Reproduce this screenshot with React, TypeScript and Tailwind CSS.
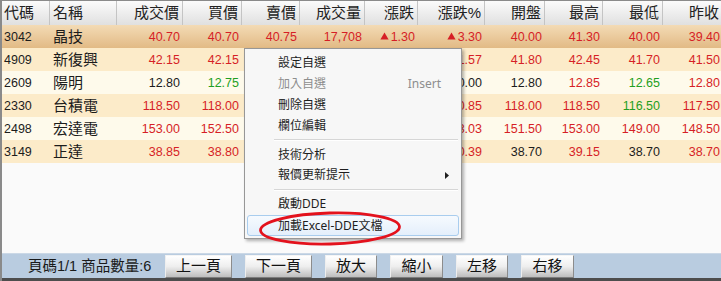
import React from 'react';

type Tone = 'r' | 'g' | 'k';
type Cell = [string, Tone, boolean?];

interface QuoteRow {
  code: string;
  name: string;
  cells: Cell[];
}

const headers = ['代碼', '名稱', '成交價', '買價', '賣價', '成交量', '漲跌', '漲跌%', '開盤', '最高', '最低', '昨收'];

// cells under the context menu are left blank: the menu hides them
const rows: QuoteRow[] = [
  {
    code: '3042',
    name: '晶技',
    cells: [['40.70', 'r'], ['40.70', 'r'], ['40.75', 'r'], ['17,708', 'r'], ['1.30', 'r', true], ['3.30', 'r', true], ['40.00', 'r'], ['41.30', 'r'], ['40.00', 'r'], ['39.40', 'r']],
  },
  {
    code: '4909',
    name: '新復興',
    cells: [['42.15', 'r'], ['42.15', 'r'], ['', 'r'], ['', 'r'], ['', 'r'], ['1.57', 'r', true], ['41.80', 'r'], ['42.45', 'r'], ['41.70', 'r'], ['41.50', 'r']],
  },
  {
    code: '2609',
    name: '陽明',
    cells: [['12.80', 'k'], ['12.75', 'g'], ['', 'k'], ['', 'k'], ['', 'k'], ['0.00', 'k'], ['12.80', 'k'], ['12.85', 'r'], ['12.65', 'g'], ['12.80', 'r']],
  },
  {
    code: '2330',
    name: '台積電',
    cells: [['118.50', 'r'], ['118.00', 'r'], ['', 'r'], ['', 'r'], ['', 'r'], ['0.85', 'r', true], ['118.00', 'r'], ['118.50', 'r'], ['116.50', 'g'], ['117.50', 'r']],
  },
  {
    code: '2498',
    name: '宏達電',
    cells: [['153.00', 'r'], ['152.50', 'r'], ['', 'r'], ['', 'r'], ['', 'r'], ['3.03', 'r', true], ['151.50', 'r'], ['153.00', 'r'], ['149.00', 'r'], ['148.50', 'r']],
  },
  {
    code: '3149',
    name: '正達',
    cells: [['38.85', 'r'], ['38.80', 'r'], ['', 'r'], ['', 'r'], ['', 'r'], ['0.39', 'r', true], ['38.70', 'k'], ['39.15', 'r'], ['38.70', 'k'], ['38.70', 'r']],
  },
];

const toneClass: Record<Tone, string> = {
  r: 'text-[#d61f26]',
  g: 'text-[#1f9f22]',
  k: 'text-[#1c1c1c]',
};

const rowBg = [
  'bg-gradient-to-b from-[#f3dbb5] to-[#e2ba85]',
  'bg-[#fcebc9]',
  'bg-[#fefaeb]',
  'bg-[#fcebc9]',
  'bg-[#fefaeb]',
  'bg-[#fcebc9]',
];

const gridCols = 'grid grid-cols-[48px_67px_66px_59px_58px_65px_53px_67px_60px_58px_60px_60px]';

function UpArrow() {
  return (
    <svg width="9" height="8" viewBox="0 0 9 8" className="mr-[2px] mb-[1px]">
      <path d="M4.5 0.5 L8.6 7.5 L0.4 7.5 Z" fill="#d61f26" />
    </svg>
  );
}

function MenuItem({ label, hint, disabled, arrow, h = 'h-[21px]' }: { label: string; hint?: string; disabled?: boolean; arrow?: boolean; h?: string }) {
  return (
    <div className={`${h} flex items-center pl-[33px] pr-[10px] leading-[14px] ${disabled ? 'text-[#8e8e8e]' : 'text-[#1e1e1e]'}`}>
      <span className="flex-1">{label}</span>
      {hint && <span className="mr-[10px] text-[#8e8e8e]">{hint}</span>}
      {arrow && (
        <svg width="4" height="7" viewBox="0 0 4 7" className="mr-[2px]">
          <path d="M0 0 L4 3.5 L0 7 Z" fill="#202020" />
        </svg>
      )}
    </div>
  );
}

function Separator({ h }: { h: string }) {
  return (
    <div className={`${h} flex flex-col justify-center pl-[29px] pr-[3px]`}>
      <div className="h-px bg-[#d6d6d6]" />
      <div className="h-px bg-white" />
    </div>
  );
}

function ContextMenu() {
  return (
    <div className="absolute left-[242px] top-[47px] w-[218px] border border-[#979797] bg-[#f7f7f7] pt-[3px] pb-[2px] text-[12px] leading-[14px] shadow-[2px_2px_3px_rgba(0,0,0,0.3)] font-['Segoe_UI','Noto_Sans','Noto_Sans_CJK_TC',sans-serif]">
      <MenuItem label="設定自選" />
      <MenuItem label="加入自選" hint="Insert" disabled />
      <MenuItem label="刪除自選" />
      <MenuItem label="欄位編輯" />
      <Separator h="h-[8px]" />
      <MenuItem label="技術分析" />
      <MenuItem label="報價更新提示" arrow h="h-[20px]" />
      <Separator h="h-[9px]" />
      <MenuItem label="啟動DDE" h="h-[20px]" />
      <div className="mx-[2px] mt-[1px] flex h-[21px] items-center rounded-[3px] border border-[#a9cdee] bg-gradient-to-b from-[#f6fafe] to-[#e4effb] pl-[30px] text-[#1e1e1e]">
        加載Excel-DDE文檔
      </div>
    </div>
  );
}

function Highlight() {
  return (
    <svg className="absolute left-[256px] top-[209px]" width="146" height="37" viewBox="0 0 146 37">
      <ellipse cx="72" cy="18.5" rx="69.5" ry="15.5" fill="none" stroke="#e3121d" strokeWidth="2.8" transform="rotate(-1.5 72 18.5)" />
    </svg>
  );
}

const buttons = [
  { label: '上一頁', w: 'w-[67px]' },
  { label: '下一頁', w: 'w-[67px]' },
  { label: '放大', w: 'w-[52px]' },
  { label: '縮小', w: 'w-[53px]' },
  { label: '左移', w: 'w-[52px]' },
  { label: '右移', w: 'w-[53px]' },
];

export default function App() {
  return (
    <div className="relative flex h-[281px] w-[721px] flex-col overflow-hidden border-l-2 border-t border-[#8a8a8a] bg-[#fafafa] font-['Liberation_Sans','Noto_Sans_CJK_TC',sans-serif] text-[#1c1c1c]">
      <div className={`${gridCols} h-[24px] w-[723px] bg-gradient-to-b from-[#fbfbfb] to-[#e0e0e0] text-[15px] leading-[18px] text-[#222]`}>
        {headers.map((h, i) => (
          <div
            key={h}
            className={`flex items-center border-r border-[#c4c4c4] ${i === 0 ? 'pl-[2px]' : i === 1 ? 'pl-[3px]' : 'justify-end pr-[3px]'}`}
          >
            {h}
          </div>
        ))}
      </div>

      {rows.map((row, ri) => (
        <div key={row.code} className={`${gridCols} h-[23px] w-[723px] leading-[18px] ${rowBg[ri]}`}>
          <div className="flex items-center pl-[2px] text-[12.5px]">{row.code}</div>
          <div className="flex items-center pl-[3px] text-[15px]">{row.name}</div>
          {row.cells.map(([v, tone, up], ci) => (
            <div key={ci} className={`flex items-center justify-end pr-[3px] text-[12.5px] ${toneClass[tone]}`}>
              {up && <UpArrow />}
              {v}
            </div>
          ))}
        </div>
      ))}

      <div className="flex-1" />

      <div className="flex h-[25px] items-center border-t border-[#cbd8e6] bg-[#b9cce0] pl-[26px] text-[15px] leading-[18px] text-[#1a1a1a]">
        <span className="w-[137px] whitespace-nowrap text-[14.5px]">頁碼1/1 商品數量:6</span>
        <div className="flex gap-[13px]">
          {buttons.map((b) => (
            <button
              key={b.label}
              className={`${b.w} flex h-[23px] items-center justify-center border-l border-t border-r border-b border-l-[#eeeeee] border-t-[#f5f5f5] border-r-[#8c8c8c] border-b-[#7c7c7c] bg-gradient-to-b from-[#ffffff] via-[#eeeeee] to-[#bdbdbd] text-[15px] text-[#111]`}
            >
              {b.label}
            </button>
          ))}
        </div>
      </div>
      <div className="h-[3px] bg-[#4d4d4d]" />

      <ContextMenu />
      <Highlight />
    </div>
  );
}
